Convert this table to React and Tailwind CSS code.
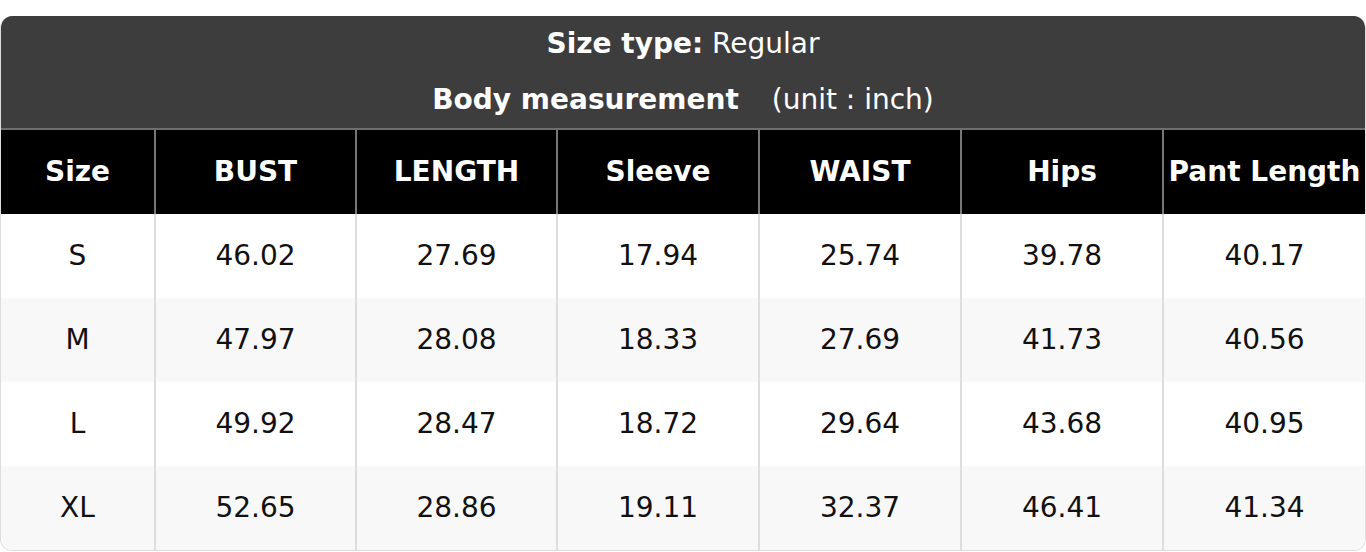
import React from "react";

const cols = ["Size", "BUST", "LENGTH", "Sleeve", "WAIST", "Hips", "Pant Length"];
const widths = ["w-[154px]", "w-[201px]", "w-[201px]", "w-[202px]", "w-[202px]", "w-[202px]", "w-[202px]"];

const rows = [
  ["S", "46.02", "27.69", "17.94", "25.74", "39.78", "40.17"],
  ["M", "47.97", "28.08", "18.33", "27.69", "41.73", "40.56"],
  ["L", "49.92", "28.47", "18.72", "29.64", "43.68", "40.95"],
  ["XL", "52.65", "28.86", "19.11", "32.37", "46.41", "41.34"],
];

export default function App() {
  return (
    <div className="w-[1366px] h-[552px] bg-white pt-4 font-['DejaVu_Sans',sans-serif] text-[28px]">
      <div className="rounded-[12px] overflow-hidden border border-[#dddddd] border-t-0">
        <div className="bg-[#3d3d3d] text-white text-center h-[114px] flex flex-col border-b-2 border-[#6f6f6f]">
          <div className="h-[56px] leading-[56px]">
            <span className="font-bold">Size type:</span> Regular
          </div>
          <div className="h-[56px] leading-[56px]">
            <span className="font-bold">Body measurement</span>
            <span className="ml-[33px]">(unit : inch)</span>
          </div>
        </div>
        <table className="w-full table-fixed border-collapse">
          <colgroup>
            {widths.map((w, i) => (
              <col key={i} className={w} />
            ))}
          </colgroup>
          <thead>
            <tr className="bg-black text-white h-[84px]">
              {cols.map((c, i) => (
                <th
                  key={c}
                  className={`font-bold text-center whitespace-nowrap p-0 ${i > 0 ? "border-l-2 border-[#777777]" : ""}`}
                >
                  {c}
                </th>
              ))}
            </tr>
          </thead>
          <tbody>
            {rows.map((r, ri) => (
              <tr key={ri} className={`h-[84px] ${ri % 2 === 1 ? "bg-[#f8f8f8]" : "bg-white"}`}>
                {r.map((v, i) => (
                  <td
                    key={i}
                    className={`text-center text-[#111111] p-0 ${i > 0 ? "border-l-2 border-[#dddddd]" : ""}`}
                  >
                    {v}
                  </td>
                ))}
              </tr>
            ))}
          </tbody>
        </table>
      </div>
    </div>
  );
}
